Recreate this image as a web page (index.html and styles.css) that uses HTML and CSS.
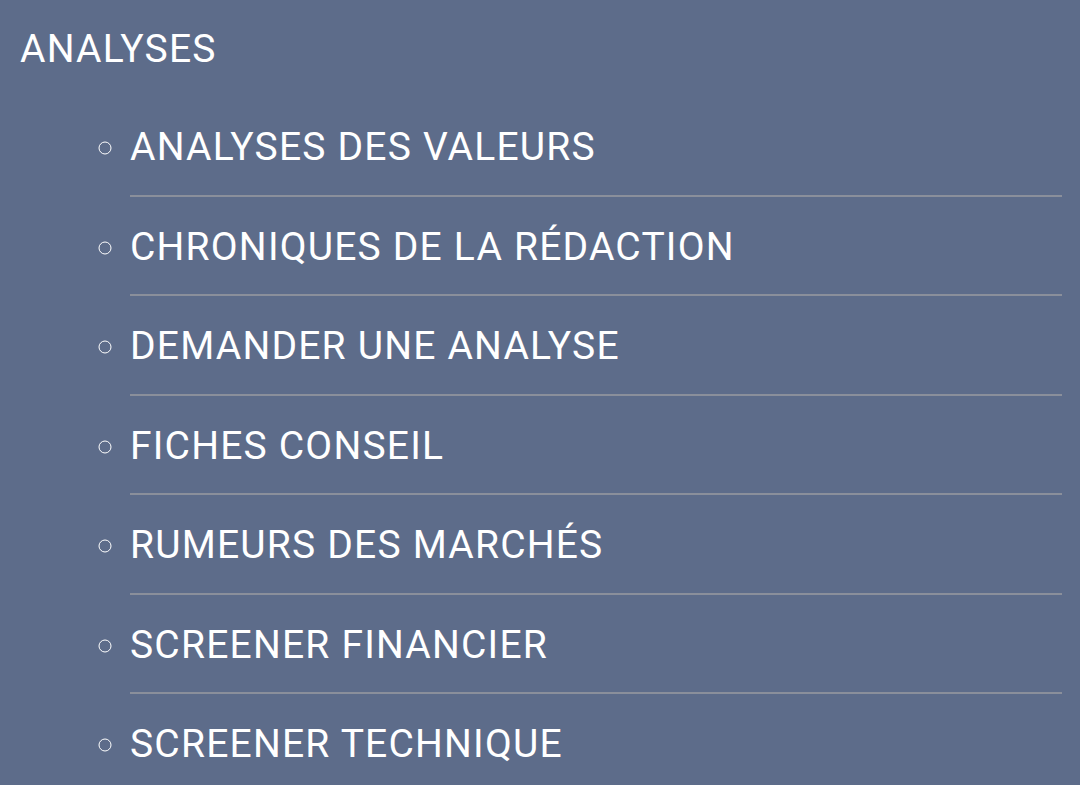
FILE: index.html
```html
<html>

<head>
	<title>Analyses</title>
	<link rel="stylesheet" href="styles.css">
</head>

<body>
	<div class="menu">
		<div class="menu-title">ANALYSES</div>
		<ul class="submenu">
			<li>ANALYSES DES VALEURS</li>
			<li>CHRONIQUES DE LA RÉDACTION</li>
			<li>DEMANDER UNE ANALYSE</li>
			<li>FICHES CONSEIL</li>
			<li>RUMEURS DES MARCHÉS</li>
			<li>SCREENER FINANCIER</li>
			<li>SCREENER TECHNIQUE</li>
		</ul>
	</div>
</body>

</html>
```

FILE: styles.css
```css
body {
	margin: 0;
	padding: 0;
	background-color: #5d6c8a;
	color: #fff;
	font-family: Roboto, "Liberation Sans", sans-serif;
}

.menu {
	padding: 23px 18px 0 20px;
}

.menu-title {
	font-size: 39px;
	letter-spacing: 1.2px;
	line-height: 53px;
}

.submenu {
	list-style: circle;
	margin: 21px 0 0 0;
	padding-left: 110px;
}

.submenu li {
	font-size: 39px;
	letter-spacing: 1.2px;
	line-height: 48px;
	padding: 26px 0 23.5px 0;
	border-bottom: 2px solid #8a8f9b;
}
```
